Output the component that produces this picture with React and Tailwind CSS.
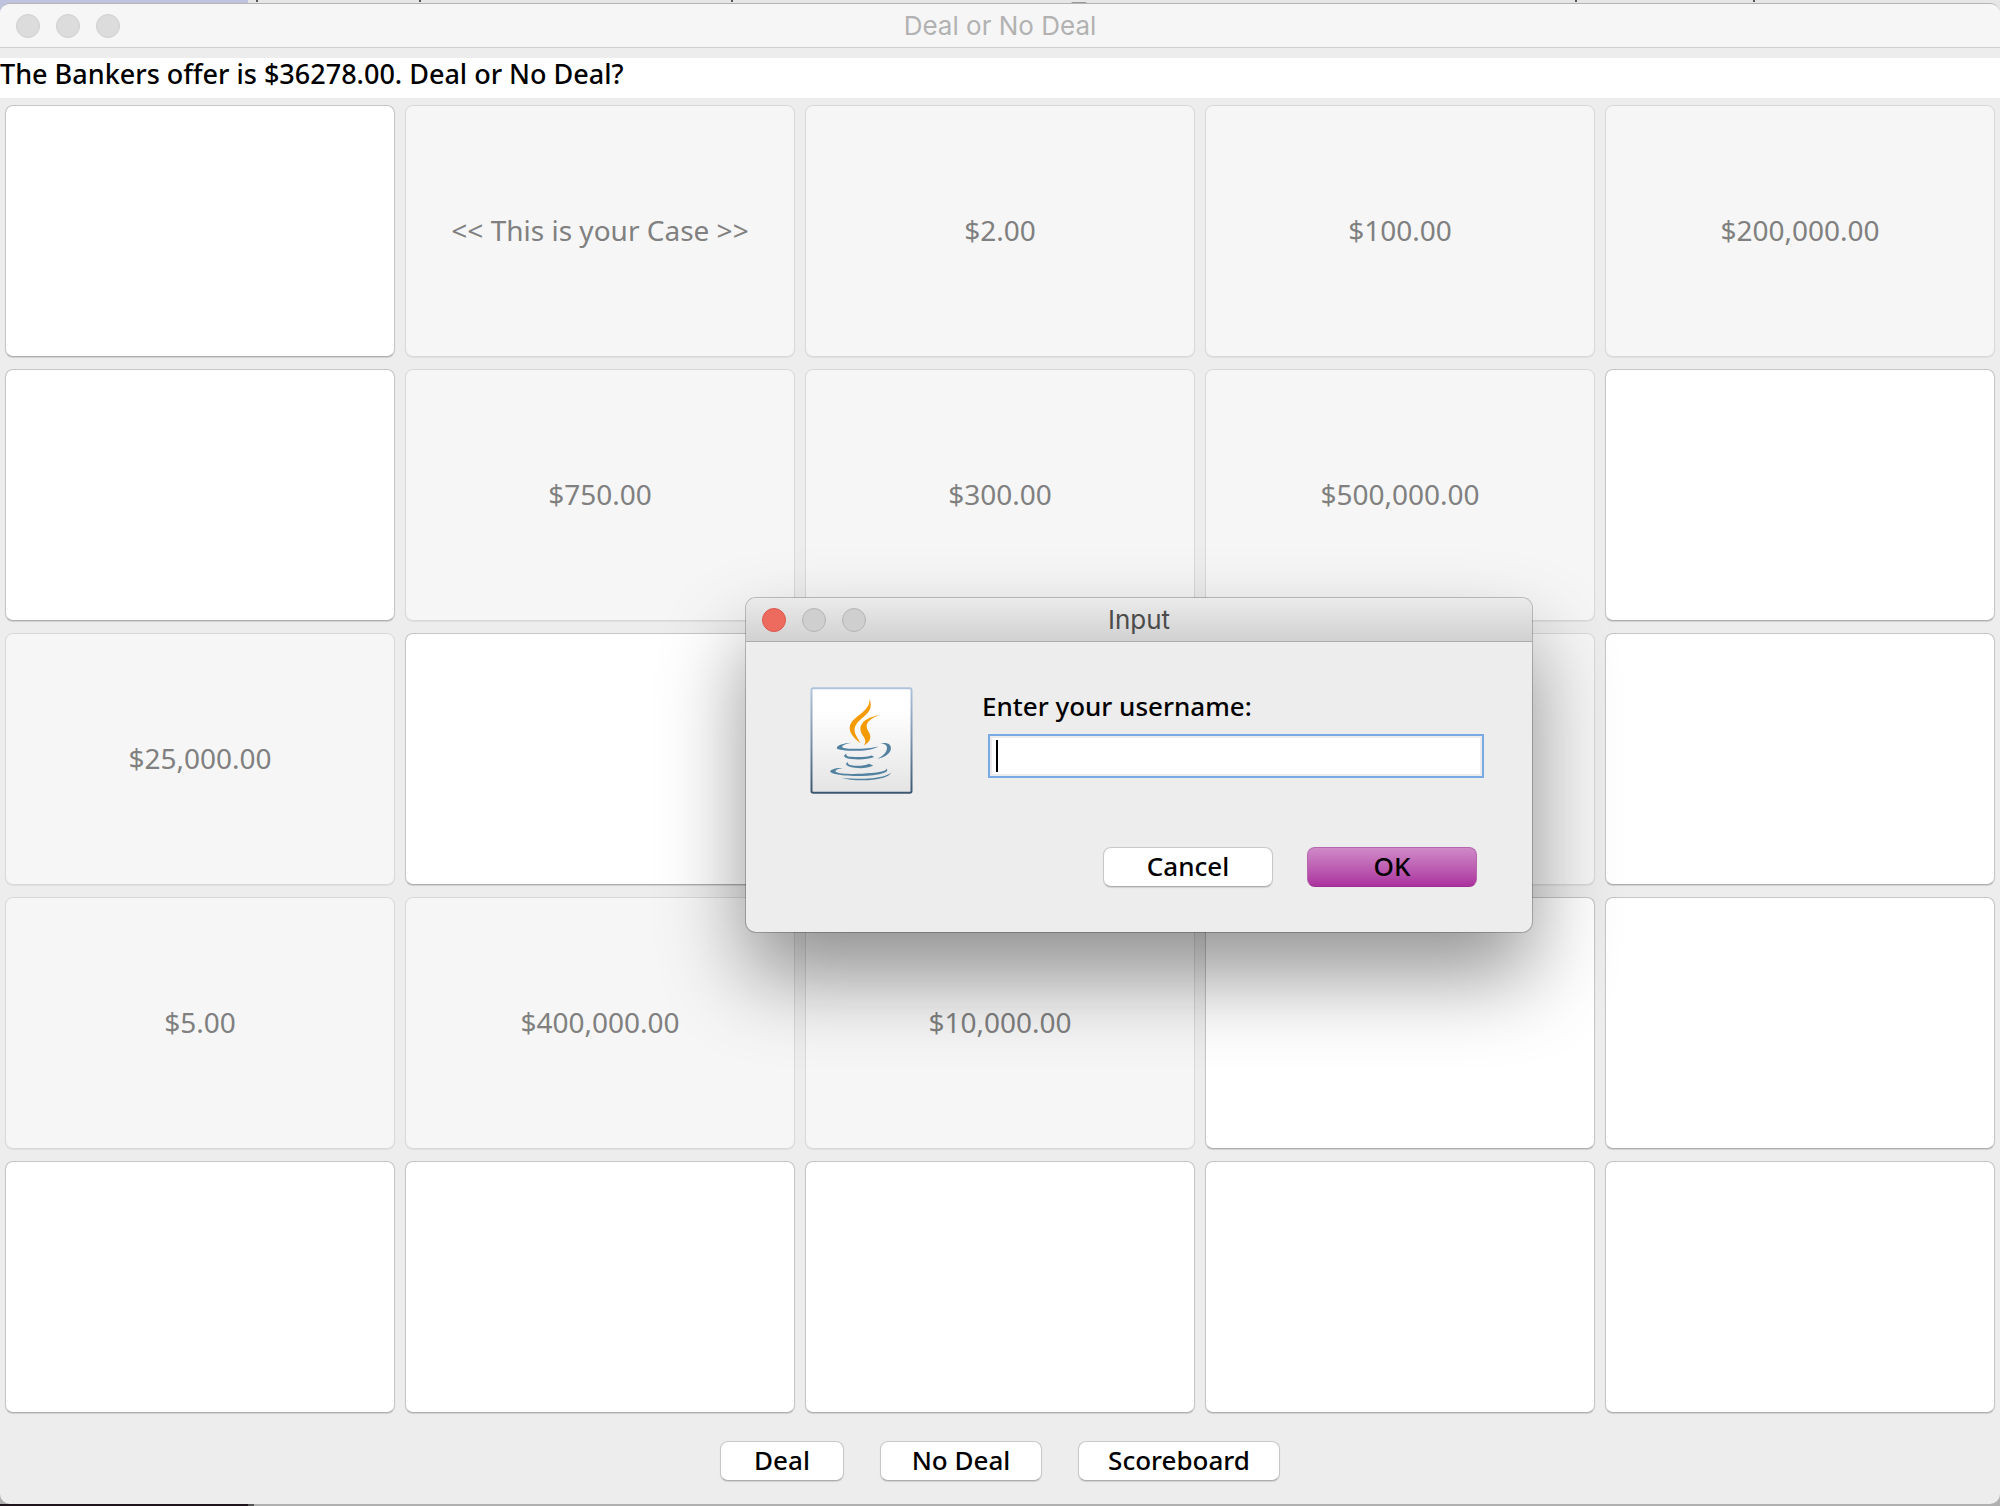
import React from "react";

const cases = [
  { open: false },
  { open: true, label: "<< This is your Case >>" },
  { open: true, label: "$2.00" },
  { open: true, label: "$100.00" },
  { open: true, label: "$200,000.00" },
  { open: false },
  { open: true, label: "$750.00" },
  { open: true, label: "$300.00" },
  { open: true, label: "$500,000.00" },
  { open: false },
  { open: true, label: "$25,000.00" },
  { open: false },
  { open: false },
  { open: true, label: "" },
  { open: false },
  { open: true, label: "$5.00" },
  { open: true, label: "$400,000.00" },
  { open: true, label: "$10,000.00" },
  { open: false },
  { open: false },
  { open: false },
  { open: false },
  { open: false },
  { open: false },
  { open: false },
];

function Case({ index, open, label }) {
  return open ? (
    <button
      type="button"
      disabled
      aria-label={label ? undefined : `Case ${index + 1}`}
      className="rounded-lg border border-[#d8d8d8] bg-[#f6f6f6] pb-0.5 text-[28px] text-[#808080] shadow-[0_1px_1px_rgba(0,0,0,0.06)]"
    >
      {label}
    </button>
  ) : (
    <button
      type="button"
      aria-label={`Case ${index + 1}`}
      className="rounded-lg border border-[#c6c6c6] border-b-[#acacac] bg-white shadow-[0_1px_1px_rgba(0,0,0,0.12)]"
    />
  );
}

function PushButton({ className, children }) {
  return (
    <button
      type="button"
      className={
        "h-10 rounded-lg border border-[#c8c8c8] border-b-[#acacac] bg-white pb-0.5 text-[26px] leading-9 font-medium text-black shadow-[0_1px_1px_rgba(0,0,0,0.12)] " +
        className
      }
    >
      {children}
    </button>
  );
}

function TrafficLights({ closeClass, restClass }) {
  return (
    <div className="flex flex-1 gap-4 pl-4">
      <button type="button" aria-label="Close" className={"size-6 rounded-full border " + closeClass} />
      <button type="button" aria-label="Minimize" className={"size-6 rounded-full border " + restClass} />
      <button type="button" aria-label="Zoom" className={"size-6 rounded-full border " + restClass} />
    </div>
  );
}

function JavaIcon() {
  return (
    <svg viewBox="32 18 309 322" className="h-[107px] w-[103px] shrink-0" aria-hidden="true">
      <defs>
        <linearGradient id="edge" x1="0" y1="0" x2="0" y2="1">
          <stop offset="0" stopColor="#b2c4dc" />
          <stop offset="0.5" stopColor="#7d94ae" />
          <stop offset="1" stopColor="#3c5870" />
        </linearGradient>
        <linearGradient id="face" x1="0" y1="0" x2="0" y2="1">
          <stop offset="0.2" stopColor="#ffffff" />
          <stop offset="1" stopColor="#e4e4e4" />
        </linearGradient>
      </defs>
      <rect x="36" y="22" width="301" height="314" rx="5" fill="url(#face)" stroke="url(#edge)" strokeWidth="6" />
      <g fill="#f39b00">
        <path d="M210 52 C222 82 208 96 187 113 C165 131 161 146 170 164 C174 172 179 179 184 187 C163 172 149 154 151 138 C154 117 178 106 196 88 C208 76 212 67 210 52 Z" />
        <path d="M240 102 C216 112 202 122 202 136 C202 149 213 154 213 168 C213 180 206 187 194 194 C201 182 198 176 191 165 C183 153 181 144 185 134 C192 117 212 108 240 102 Z" />
      </g>
      <g fill="#5382a1">
        <path d="M156 186 C137 190 126 195 129 199 C136 206 203 206 237 197 C229 203 205 210 172 210 C137 210 113 206 112 202 C112 194 132 187 156 186 Z" />
        <path d="M243 189 C262 183 276 190 275 203 C274 219 254 231 234 234 C250 226 262 216 263 203 C264 193 257 189 243 189 Z" />
        <path d="M143 217 C137 222 142 227 156 228 C181 230 204 228 217 224 L225 229 C208 236 180 238 156 235 C135 232 126 225 143 217 Z" />
        <path d="M146 244 C143 250 151 254 166 255 C184 256 197 254 209 249 L222 254 C206 262 185 264 165 261 C143 258 133 250 146 244 Z" />
        <path d="M130 262 C113 265 106 270 109 273 C120 281 176 281 216 277 C246 274 262 270 262 263 C269 271 258 277 236 281 C196 288 135 287 108 280 C92 276 87 271 99 266 C109 262 120 261 130 262 Z" />
        <path d="M275 275 C272 286 254 292 226 296 C193 301 151 299 125 291 C162 295 202 296 229 291 C254 287 269 282 275 275 Z" />
      </g>
    </svg>
  );
}

function InputDialog() {
  return (
    <div
      role="dialog"
      aria-labelledby="dialog-title"
      className="absolute top-[598px] left-[746px] flex w-[786px] flex-col overflow-hidden rounded-[10px] bg-[#ededed] shadow-[0_0_0_1px_rgba(0,0,0,0.22),0_44px_84px_rgba(0,0,0,0.42)]"
    >
      <div className="flex h-11 items-center border-b border-[#adadad] bg-linear-to-b from-[#ebebeb] to-[#d1d1d1]">
        <TrafficLights
          closeClass="border-[#d9584c] bg-[#ec6a5e]"
          restClass="border-[#b5b5b5] bg-[#cfcfcf]"
        />
        <h2 id="dialog-title" className="font-[Inter,sans-serif] text-[26px] leading-8 text-[#4c4c4c]">
          Input
        </h2>
        <div className="flex-1 pr-4" />
      </div>
      <form className="flex flex-col pt-[45px] pr-12 pb-[45px] pl-16" onSubmit={(e) => e.preventDefault()}>
        <div className="flex gap-[69px]">
          <JavaIcon />
          <div className="flex flex-1 flex-col">
            <label htmlFor="username" className="text-[26px] leading-[38px] font-medium text-black">
              Enter your username:
            </label>
            <div className="relative mt-[9px] ml-1.5">
              <input
                id="username"
                type="text"
                className="block h-11 w-full border-2 border-[#79aae3] bg-white px-2 text-[26px] caret-transparent shadow-[inset_0_0_0_2px_#ededed] outline-none"
              />
              <span className="absolute top-1.5 left-2 h-8 w-0.5 bg-black" />
            </div>
          </div>
        </div>
        <div className="mt-[53px] mr-[7px] flex justify-end gap-[34px]">
          <PushButton className="w-[170px]">Cancel</PushButton>
          <button
            type="submit"
            className="h-10 w-[170px] rounded-lg border border-[#b566ae] border-b-[#9c2d92] bg-linear-to-b from-[#cf89c8] to-[#ab319f] pb-0.5 text-[26px] leading-9 font-medium text-black"
          >
            OK
          </button>
        </div>
      </form>
    </div>
  );
}

export default function App() {
  return (
    <div className="relative flex min-h-screen flex-col bg-[#b0b0b0] font-['Noto_Sans',sans-serif]">
      <div className="absolute inset-x-0 top-0 flex h-5">
        <div className="w-[248px] bg-[#bfc3de]" />
        <div className="relative flex-1 bg-[#e6e6e6]">
          <span className="absolute top-0 left-2 h-0.5 w-0.5 bg-[#555]" />
          <span className="absolute top-0 left-[171px] h-0.5 w-0.5 bg-[#555]" />
          <span className="absolute top-0 left-[483px] h-0.5 w-0.5 bg-[#555]" />
          <span className="absolute top-0.5 left-[823px] h-0.5 w-4 rounded-t-full bg-[#999]" />
          <span className="absolute top-0 left-[1327px] h-0.5 w-0.5 bg-[#555]" />
          <span className="absolute top-0 left-[1505px] h-0.5 w-0.5 bg-[#555]" />
        </div>
      </div>
      <div className="absolute inset-x-0 bottom-0 flex h-0.5">
        <div className="w-[248px] bg-[#1d141c]" />
        <div className="w-1.5 bg-[#555]" />
        <div className="flex-1" />
      </div>

      <main className="relative mt-[3px] mb-0.5 flex flex-1 flex-col overflow-hidden rounded-[10px] border-t border-[#b4b4b4] bg-[#ededed]">
        <header className="flex h-11 items-center border-b border-[#d0d0d0] bg-[#f6f6f6]">
          <TrafficLights
            closeClass="border-[#cecece] bg-[#dcdcdc]"
            restClass="border-[#cecece] bg-[#dcdcdc]"
          />
          <h1 className="font-[Inter,sans-serif] text-[26px] leading-8 text-[#b2b2b2]">Deal or No Deal</h1>
          <div className="flex-1 pr-4" />
        </header>
        <p className="mt-2.5 h-10 bg-white text-[27px] leading-8 font-medium text-black">
          The Bankers offer is $36278.00. Deal or No Deal?
        </p>
        <div className="grid flex-1 grid-cols-5 grid-rows-5 gap-x-2.5 gap-y-3 px-[5px] pt-[7px]">
          {cases.map((c, i) => (
            <Case key={i} index={i} {...c} />
          ))}
        </div>
        <div className="mt-7 mb-[23px] flex justify-center gap-9">
          <PushButton className="w-[124px]">Deal</PushButton>
          <PushButton className="w-[162px]">No Deal</PushButton>
          <PushButton className="w-[202px]">Scoreboard</PushButton>
        </div>
      </main>

      <InputDialog />
    </div>
  );
}
